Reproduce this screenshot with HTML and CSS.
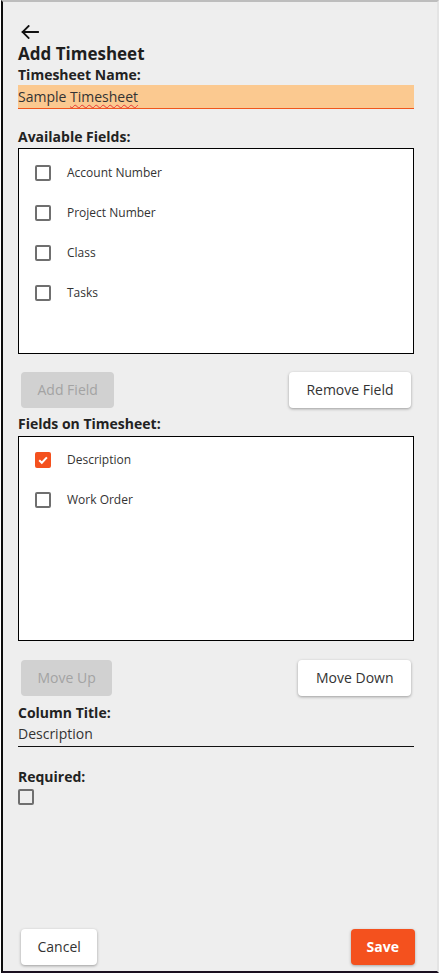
FILE: index.html
```html
<!DOCTYPE html>
<html lang="en">
<head>
<meta charset="utf-8">
<title>Add Timesheet</title>
<link rel="stylesheet" href="styles.css">
</head>
<body>
<div class="page">
  <div class="back">
    <svg width="18" height="14" viewBox="0 0 18 14" aria-hidden="true">
      <path d="M17 7H1.6M7.6 1L1.6 7L7.6 13" fill="none" stroke="#111" stroke-width="1.8" stroke-linecap="square"/>
    </svg>
  </div>
  <h1 class="title">Add Timesheet</h1>

  <div class="label label-name">Timesheet Name:</div>
  <div class="text-input focused">Sample <span class="misspelled">Timesheet</span></div>

  <div class="label label-gap">Available Fields:</div>
  <div class="list-box list-box-tall">
    <div class="row"><span class="check"></span><span class="row-text">Account Number</span></div>
    <div class="row"><span class="check"></span><span class="row-text">Project Number</span></div>
    <div class="row"><span class="check"></span><span class="row-text">Class</span></div>
    <div class="row"><span class="check"></span><span class="row-text">Tasks</span></div>
  </div>

  <div class="btn-row btn-row-first">
    <button class="btn btn-disabled">Add Field</button>
    <button class="btn btn-light btn-wide">Remove Field</button>
  </div>

  <div class="label label-fields">Fields on Timesheet:</div>
  <div class="list-box">
    <div class="row"><span class="check checked"><svg width="12" height="12" viewBox="0 0 12 12" aria-hidden="true"><path d="M2.2 6.3L4.8 8.8L9.9 3.4" fill="none" stroke="#fff" stroke-width="2"/></svg></span><span class="row-text">Description</span></div>
    <div class="row"><span class="check"></span><span class="row-text">Work Order</span></div>
  </div>

  <div class="btn-row btn-row-second">
    <button class="btn btn-disabled">Move Up</button>
    <button class="btn btn-light btn-wide">Move Down</button>
  </div>

  <div class="label label-column">Column Title:</div>
  <div class="text-input plain">Description</div>

  <div class="label label-required">Required:</div>
  <span class="check standalone"></span>

  <div class="footer">
    <button class="btn btn-light btn-cancel">Cancel</button>
    <button class="btn btn-primary">Save</button>
  </div>
</div>
</body>
</html>
```

FILE: styles.css
```css
* { box-sizing: border-box; }

html, body {
  margin: 0;
  padding: 0;
  background: #ffffff;
}

body {
  font-family: "Open Sans", "Noto Sans", "Liberation Sans", sans-serif;
  color: #222;
}

.page {
  margin-left: 1px;
  width: 438px;
  height: 973px;
  background: #eeeeee;
  border-top: 2px solid #bdbdbd;
  border-left: 2px solid #0d0d0d;
  border-right: 2px solid #e4e4e4;
  border-bottom: 2px solid #1b1020;
  padding: 0 23px 6px 15px;
  display: flex;
  flex-direction: column;
  align-items: stretch;
}

.back {
  margin-top: 23px;
  margin-left: 3px;
  height: 14px;
  line-height: 0;
}

.title {
  margin: 5px 0 0;
  font-size: 17px;
  line-height: 20px;
  font-weight: 700;
  color: #1e1e1e;
}

.label {
  font-size: 14px;
  line-height: 18px;
  font-weight: 700;
  color: #222;
}

.label-name { margin-top: 2px; }
.label-gap { margin-top: 19px; }
.label-fields { margin-top: 7px; }
.label-column { margin-top: 8px; }
.label-required { margin-top: 21px; }

.text-input {
  height: 24px;
  font-size: 14px;
  line-height: 23px;
  color: #333;
  border-bottom: 1px solid #111;
  margin-top: 1px;
  white-space: nowrap;
}

.text-input.focused {
  background: #fbc990;
  border-bottom-color: #f0561d;
}

.text-input.plain {
  margin-top: 1px;
  line-height: 22px;
}

.misspelled {
  text-decoration: underline wavy #e53935;
  text-decoration-thickness: 1px;
  text-underline-offset: 2px;
}

.list-box {
  margin-top: 3px;
  height: 205px;
  background: #ffffff;
  border: 1px solid #000;
  padding-top: 3px;
}

.list-box-tall {
  margin-top: 2px;
  height: 206px;
  padding-top: 4px;
}

.row {
  height: 40px;
  display: flex;
  align-items: center;
  padding-left: 16px;
}

.row-text {
  margin-left: 16px;
  font-size: 12px;
  line-height: 16px;
  color: #333;
}

.check {
  width: 16px;
  height: 16px;
  border: 2px solid #6f6f6f;
  border-radius: 2px;
  display: inline-flex;
  align-items: center;
  justify-content: center;
  flex: none;
}

.check.checked {
  background: #f4511e;
  border-color: #f4511e;
}

.check.standalone {
  margin-top: 3px;
  align-self: flex-start;
}

.btn-row {
  display: flex;
  justify-content: space-between;
  align-items: center;
  padding: 0 3px;
}

.btn-row-first { margin-top: 18px; }
.btn-row-second { margin-top: 19px; }

.btn {
  height: 36px;
  padding: 0 16.5px;
  border: none;
  border-radius: 4px;
  font-family: "Open Sans", "Noto Sans", "Liberation Sans", sans-serif;
  font-size: 14px;
  line-height: 36px;
  cursor: pointer;
}

.btn-disabled {
  background: #d1d1d1;
  color: #a3a3a3;
}

.btn-light {
  background: #ffffff;
  color: #333;
  box-shadow: 0 1px 3px rgba(0, 0, 0, 0.35);
}

.btn-wide {
  padding: 0 17.5px;
}

.btn-primary {
  background: #f4511e;
  color: #ffffff;
  font-weight: 700;
  padding: 0 16px;
  box-shadow: 0 1px 3px rgba(0, 0, 0, 0.3);
}

.footer {
  margin-top: auto;
  display: flex;
  justify-content: space-between;
  align-items: center;
  padding: 0 0 0 3px;
  margin-right: -1px;
}
```
